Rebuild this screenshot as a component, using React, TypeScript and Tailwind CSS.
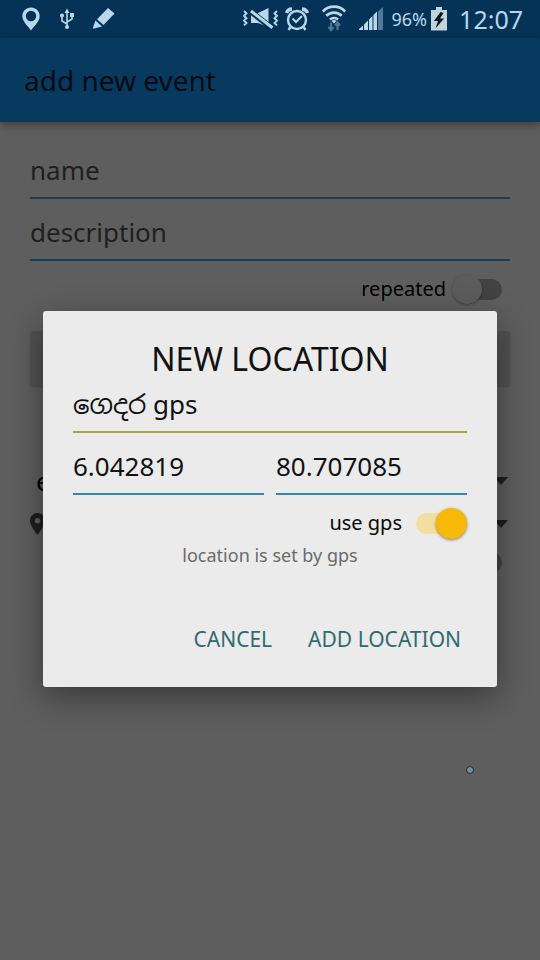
import type { ReactNode } from "react";

function StatusBar() {
  return (
    <div className="flex h-[38px] items-center bg-[#053357] pr-[17px] pl-[21px] text-[#b9d6ea]">
      <div className="flex flex-1 items-center gap-3">
        <svg className="h-6 w-5" viewBox="0 0 20 24" fill="currentColor">
          <path fillRule="evenodd" d="M10 0.500C5 .5 1.300 4.200 1.300 9c0 5.500 5.600 10 8.700 14.500C13.100 19 18.700 14.500 18.700 9 18.700 4.200 15 .5 10 .5Zm0 3.300a5.200 5.200 0 1 1 0 10.400 5.200 5.200 0 0 1 0-10.400Z" />
        </svg>
        <svg className="h-6 w-7" viewBox="0 0 28 24" fill="none" stroke="currentColor" strokeWidth="1.600">
          <path d="M14 19V5M14 17l-5-3V9M14 15l5-3V9" />
          <path d="M14 1.500l2.500 4.500h-5Z" fill="currentColor" stroke="none" />
          <circle cx="14" cy="20" r="2" fill="currentColor" stroke="none" />
          <circle cx="9" cy="8.500" r="2" fill="currentColor" stroke="none" />
          <path d="M17 6h4v4h-4Z" fill="currentColor" stroke="none" />
        </svg>
        <svg className="h-6 w-6" viewBox="0 0 24 24" fill="currentColor">
          <path d="M15 1 21.500 6.500 10.500 18 4 12.200ZM2.500 13.500l6.500 6L-.5 22Z" />
        </svg>
      </div>
      <div className="flex items-center gap-1">
        <svg className="h-6 w-9" viewBox="0 0 36 24" fill="none" stroke="currentColor">
          <path d="M8 6h7l10.500-5v19L15 16H8Z" fill="currentColor" stroke="none" />
          <path d="M7 4 30 22" stroke="#053357" strokeWidth="5.600" />
          <path d="M8 4 29.500 20.800" strokeWidth="3" />
          <path d="M1 4l2.500 2.400L1 8.800l2.500 2.400L1 13.600 3.500 16 1 18.400M34 4l-2.500 2.400L34 8.800l-2.500 2.400 2.500 2.400-2.500 2.400 2.500 2.400" strokeWidth="1.900" />
        </svg>
        <svg className="ml-[2px] h-6 w-6" viewBox="0 0 24 24" fill="none" stroke="currentColor" strokeWidth="2.400">
          <circle cx="12" cy="13" r="9" />
          <path d="M7.500 11.500 11 15l6-6" strokeWidth="2" />
          <path d="M1.500 6a6 6 0 0 1 5.500-4M22.500 6a6 6 0 0 0-5.500-4" strokeWidth="3.400" />
          <path d="M5.500 20 3.500 23M18.500 20l2 3" />
        </svg>
        <svg className="ml-[9px] h-[28px] w-6" viewBox="0 0 24 28" fill="none" stroke="currentColor" strokeWidth="2.700">
          <path d="M0.800 6.500a15.500 15.500 0 0 1 22.400 0M4.300 10.800a10.800 10.800 0 0 1 15.400 0M8 14.600a6 6 0 0 1 8 0" />
          <path d="m12 18.500-2.500-2.500a4 4 0 0 1 5 0Z" fill="currentColor" stroke="none" />
          <path d="M9 17.500v7M6.500 22l2.500 3 2.500-3M15.500 25v-7M13 20.500l2.500-3 2.500 3" stroke="#4c7895" strokeWidth="2.200" />
        </svg>
        <svg className="ml-[9px] h-6 w-6" viewBox="0 0 24 24" fill="currentColor">
          <path d="M0 23v-1l4-3.500V23ZM5 23v-5.500l4-4V23ZM10 23V12.500l3.500-3.500v14ZM14.500 23V8L18 4.500V23Z" />
          <path d="M19 23V4.500L24 0v23Z" fill="#52789a" />
        </svg>
        <span className="ml-[5px] text-[18px] leading-6">96%</span>
        <svg className="h-6 w-4" viewBox="0 0 16 24">
          <path d="M5 0h6v3h5v20.500H0V3h5Z" fill="#c2d3dc" />
          <path d="M9.500 5 3 14h4l-2.500 7.500L13 11.500H9L12.500 6Z" fill="#061826" />
        </svg>
        <span className="ml-2 text-[25px] leading-8">12:07</span>
      </div>
    </div>
  );
}

function Caret() {
  return (
    <svg className="h-2 w-[14px]" viewBox="0 0 14 8" fill="#1e1e1e">
      <path d="M0 0h14L7 8Z" />
    </svg>
  );
}

function SelectRow({ id, icon, value }: { id: string; icon?: ReactNode; value: string }) {
  return (
    <div className="flex h-[43px] items-center">
      {icon}
      <select id={id} aria-label={id} className="min-w-0 flex-1 appearance-none bg-transparent pl-[6px] text-[26px] leading-8 text-black outline-none">
        <option>{value}</option>
      </select>
      <Caret />
    </div>
  );
}

const lineField =
  "block h-[44px] w-full min-w-0 rounded-none border-b-2 bg-transparent pb-[12px] text-[26px] leading-8 outline-none";

const offSwitch =
  "relative h-[21px] w-[46px] appearance-none rounded-full bg-[#424242] before:absolute before:-top-[5px] before:-left-[4px] before:size-[30px] before:rounded-full before:bg-[#5c5c5c] before:shadow-[0_1px_2px_rgba(0,0,0,0.35)]";

const onSwitch =
  "relative mr-[5px] h-[21px] w-[46px] appearance-none rounded-full bg-[#f2dfa0] before:absolute before:-top-[5px] before:-right-[5px] before:size-[31px] before:rounded-full before:bg-[#f6b905] before:shadow-[0_1px_3px_rgba(0,0,0,0.45)]";

function EventForm() {
  return (
    <form className="flex flex-col px-[30px] pt-[33px]">
      <input aria-label="name" placeholder="name" className={`${lineField} border-[#173f5b] text-black placeholder:text-[#1f1f1f]`} />
      <input aria-label="description" placeholder="description" className={`${lineField} mt-[18px] border-[#173f5b] text-black placeholder:text-[#1f1f1f]`} />
      <div className="mt-3 flex h-8 items-center justify-end gap-[10px] pr-2">
        <label htmlFor="repeated" className="text-[20px] leading-7 text-black">repeated</label>
        <input id="repeated" type="checkbox" role="switch" className={offSwitch} />
      </div>
      <button type="button" aria-label="time" className="mt-[26px] h-[55px] rounded-[3px] bg-[#525252] shadow-[0_1px_2px_rgba(0,0,0,0.2)]" />
      <div className="mt-[73px] flex flex-col pr-[2px]">
        <SelectRow id="type" value="e" />
        <SelectRow
          id="place"
          value=""
          icon={
            <svg className="h-[22px] w-[15px]" viewBox="0 0 15 22" fill="#1e1e1e">
              <path fillRule="evenodd" d="M7.500 0A7.400 7.400 0 0 0 0 7.500C0 13 7.500 22 7.500 22S15 13 15 7.500A7.400 7.400 0 0 0 7.500 0Zm0 5a2.700 2.700 0 1 1 0 5.400 2.700 2.700 0 0 1 0-5.400Z" />
            </svg>
          }
        />
      </div>
      <div className="mt-px flex h-8 items-center justify-end pr-2">
        <input aria-label="reminder" type="checkbox" role="switch" className={offSwitch} />
      </div>
    </form>
  );
}

function LocationDialog() {
  return (
    <div className="absolute inset-0 flex items-center px-[43px] pt-[38px]">
      <section
        role="dialog"
        aria-labelledby="dialog-title"
        className="flex w-full flex-col rounded-[3px] bg-[#ebebeb] px-[30px] pt-[26px] pb-7 shadow-[0_10px_32px_rgba(0,0,0,0.4)]"
      >
        <h2 id="dialog-title" className="text-center text-[32px] leading-[44px] text-[#111]">NEW LOCATION</h2>
        <input aria-label="location name" defaultValue="ගෙදර gps" className={`${lineField} mt-2 border-[#a9a640] text-[#111]`} />
        <div className="mt-[18px] flex gap-3">
          <input aria-label="latitude" defaultValue="6.042819" className={`${lineField} flex-1 border-[#2f87b5] text-[#111]`} />
          <input aria-label="longitude" defaultValue="80.707085" className={`${lineField} flex-1 border-[#2f87b5] text-[#111]`} />
        </div>
        <div className="mt-3 flex h-8 items-center justify-end gap-[14px]">
          <label htmlFor="use-gps" className="text-[20px] leading-7 text-[#0a0a0a]">use gps</label>
          <input id="use-gps" type="checkbox" role="switch" defaultChecked className={onSwitch} />
        </div>
        <p className="mt-1 text-center text-[18px] leading-6 text-[#6a6a6a]">location is set by gps</p>
        <div className="mt-[52px] flex justify-end gap-9 pr-[6px] text-[21px] leading-10 text-[#2f6b70]">
          <button type="button">CANCEL</button>
          <button type="button">ADD LOCATION</button>
        </div>
      </section>
    </div>
  );
}

export default function App() {
  return (
    <div className="relative flex min-h-screen flex-col overflow-hidden bg-[#5e5e5e] font-['Noto_Sans','Noto_Sans_Sinhala',sans-serif]">
      <StatusBar />
      <header className="flex h-[84px] items-center bg-[#083a5f] px-6 shadow-[0_3px_8px_rgba(0,0,0,0.35)]">
        <h1 className="text-[28px] leading-9 text-[#020a12]">add new event</h1>
      </header>
      <EventForm />
      <div className="absolute top-[766px] right-[66px] size-2 rounded-full border border-[#1d2b36] bg-[#7b8c99]" />
      <LocationDialog />
    </div>
  );
}
